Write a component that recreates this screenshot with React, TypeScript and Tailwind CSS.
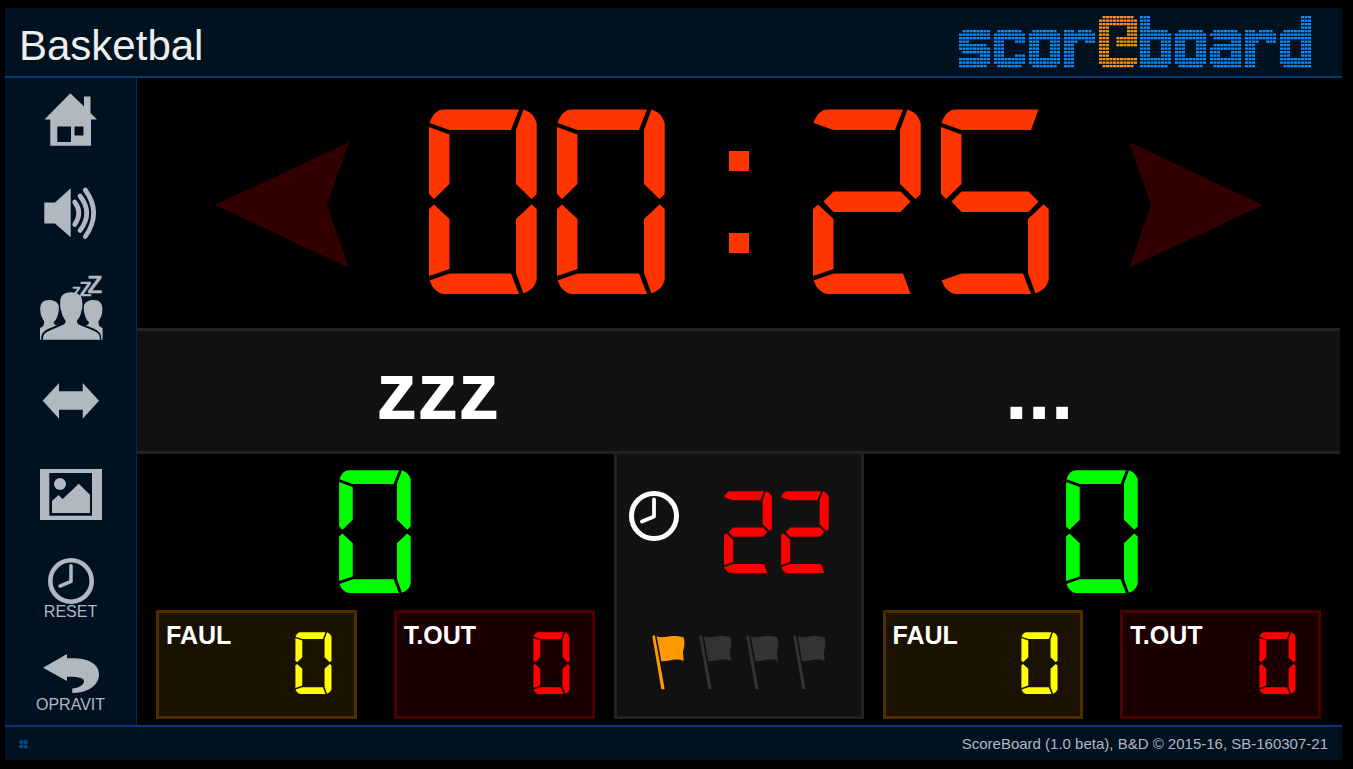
import { FC, ReactNode } from 'react';

// Seven segment shapes, drawn on a 108 x 185 cell
const SEGMENTS: Record<string, string> = {
  a: 'M0.5 14 Q5 0.5 15 0.5 H90 L82 21 H20.5 Z',
  b: 'M94.5 0.5 Q105 4 107.7 14 V85 L102.5 90 L87 75 V21 Z',
  c: 'M102.5 95.5 L107.7 100 V171 Q105 181 94.5 184.5 L87 164 V110 Z',
  d: 'M0.5 171.5 L20.5 164.5 H82 L90 185 H15 Q5 184 0.5 171.5 Z',
  e: 'M5 95.5 L20.5 110 V160 L0 167 V100 Z',
  f: 'M0 18 L20.5 25.5 V75 L5 90 L0 85 Z',
  g: 'M10.5 92.5 L20.5 82.5 H87.5 L97.5 92.5 L87.5 103 H20.5 Z',
  // longer top and bottom bars, for digits with nothing on their right
  A: 'M0.5 14 Q5 0.5 15 0.5 H97.5 L90 21 H20.5 Z',
  D: 'M0.5 171.5 L20.5 164.5 H90 L97.5 185 H15 Q5 184 0.5 171.5 Z',
};

const DIGITS: Record<string, string> = {
  '0': 'abcdef',
  '1': 'bc',
  '2': 'abgeD',
  '3': 'abgcd',
  '4': 'fgbc',
  '5': 'Afgcd',
  '6': 'Afgedc',
  '7': 'abc',
  '8': 'abcdefg',
  '9': 'abcdfg',
};

const Digit: FC<{ value: string; className: string }> = ({ value, className }) => (
  <svg viewBox="0 0 108 185" className={className} fill="currentColor" aria-hidden="true">
    {DIGITS[value].split('').map((s) => (
      <path key={s} d={SEGMENTS[s]} />
    ))}
  </svg>
);

const Display: FC<{ value: string; className: string; digit: string }> = ({ value, className, digit }) => (
  <div role="img" aria-label={value} className={className}>
    {value.split('').map((v, i) => (
      <Digit key={i} value={v} className={digit} />
    ))}
  </div>
);

// Dot matrix letters of the logo, x is the left edge of each one
const ROUND = ['.#######.', '#########', '#########', '###...###', '###...###', '###...###', '###...###', '###...###', '#########', '#########', '.#######.'];
const LEG = ['###.####.', '#########', '#########', '####..###', '###', '###', '###', '###', '###', '###', '###'];

const LOGO = [
  { x: 0, rows: ['.########', '#########', '#########', '###......', '########.', '#########', '.########', '......###', '#########', '#########', '########.'] },
  { x: 35, rows: ['.#######.', '#########', '#########', '###...###', '###', '###', '###', '###...###', '#########', '#########', '.#######.'] },
  { x: 70, rows: ROUND },
  { x: 105, rows: LEG },
  { x: 140, rows: ['.#########.', '###########', '###########', '###.....###', '###.....###', '###.....###', '###..######', '###..######', '###..######', '###', '###', '###', '###########', '###########', '.#########.'] },
  { x: 181, rows: ['###', '###', '###', '###', '########.', '#########', '#########', '###...###', '###...###', '###...###', '###...###', '###...###', '#########', '#########', '########.'] },
  { x: 216, rows: ROUND },
  { x: 251, rows: ['.#######.', '#########', '.########', '......###', '.########', '#########', '###...###', '###...###', '#########', '#########', '.########'] },
  { x: 286, rows: LEG },
  { x: 321, rows: ['......###', '......###', '......###', '......###', '.########', '#########', '#########', '###...###', '###...###', '###...###', '###...###', '###...###', '#########', '#########', '.########'] },
];

const Logo: FC = () => (
  <svg width="353" height="52" viewBox="0 0 353 52" role="img" aria-label="scoreboard">
    {LOGO.map(({ x, rows }, n) => (
      <g key={x} fill={n === 4 ? '#ff9409' : '#098cfa'}>
        {rows.map((row, r) =>
          row.split('').map((dot, c) =>
            dot === '#' ? (
              <rect key={`${r}-${c}`} x={x + c * 3.5} y={(15 - rows.length + r) * 3.5} width="3" height="2.3" />
            ) : null
          )
        )}
      </g>
    ))}
  </svg>
);

const ClockIcon: FC<{ className: string }> = ({ className }) => (
  <svg viewBox="0 0 50 50" className={className} fill="none" stroke="currentColor" aria-hidden="true">
    <circle cx="25" cy="25" r="22.5" strokeWidth="5" />
    <path d="M25 8.5 V25.5 L13 30.5" strokeWidth="3.8" strokeLinecap="round" strokeLinejoin="round" />
  </svg>
);

const Glyph: FC<{ children: ReactNode }> = ({ children }) => (
  <svg width="63" height="64" viewBox="0 0 63 64" fill="currentColor" className="overflow-visible" aria-hidden="true">
    {children}
  </svg>
);

const SideButton: FC<{ label: string; children: ReactNode }> = ({ label, children }) => (
  <button
    aria-label={label}
    className="flex h-16 w-20 flex-col items-center justify-center text-base leading-4 whitespace-nowrap"
  >
    {children}
  </button>
);

const Sidebar: FC = () => (
  <nav className="flex w-[132px] flex-none flex-col items-center justify-between border-r border-[#002850] bg-[#00111f] pt-2.5 pb-2.5 text-[#b2b8c0]">
    <SideButton label="Home">
      <Glyph>
        <path
          fillRule="evenodd"
          d="M31.3 5.3 L45 18.5 V8.5 H51.5 V25 L58 31.5 H52 V57.7 H11.3 V31.5 H5.5 Z M18.3 38.5 V54 H32 V38.5 Z M35.5 38.5 V47.5 H44.5 V38.5 Z"
        />
      </Glyph>
    </SideButton>
    <SideButton label="Sound">
      <Glyph>
        <path d="M5.3 20.5 H16 L31.7 6.3 V55.3 L16 41.5 H5.3 Z" />
        <path
          d="M35.7 20 Q44 31 35.7 42.5 M41 14 Q54.5 31 41 48.5 M46.3 8 Q63 31 46.3 54.5"
          fill="none"
          stroke="currentColor"
          strokeWidth="4.7"
          strokeLinecap="round"
        />
      </Glyph>
    </SideButton>
    <SideButton label="Teams">
      <Glyph>
        <path d="M10.3 24 C4 24 1 27 1.2 34 C1.4 39 3 42 5 45 C5.5 49 4 51 1 52 V63.7 H2.3 C2 57 5 55 10 52.5 L18 49.3 C16 48.8 14.5 48.5 14.7 46 C17.5 44 18.5 40 19.3 37 C20 34 20 32 19.5 29 C18 25.5 14 24 10.3 24 Z" />
        <path
          transform="translate(64.6 0) scale(-1 1)"
          d="M10.3 24 C4 24 1 27 1.2 34 C1.4 39 3 42 5 45 C5.5 49 4 51 1 52 V63.7 H2.3 C2 57 5 55 10 52.5 L18 49.3 C16 48.8 14.5 48.5 14.7 46 C17.5 44 18.5 40 19.3 37 C20 34 20 32 19.5 29 C18 25.5 14 24 10.3 24 Z"
        />
        <path d="M32 16.3 C26 16.5 21 19 21.3 26 C21 30 21.2 33 22.3 35 C23 39 24.5 42 26.5 44.5 C27 47 25.5 48.5 22.5 49.5 L12 54 C6 56.5 4 58 4 63.7 H61 C61 58 59 56.5 53 54 L42 49.5 C39 48.5 37.5 47 38 44.5 C40.5 42 41.8 39 42.4 35 C43.4 33 43.6 30 43.2 26 C43.4 19 38 16.5 32 16.3 Z" />
        <g className="font-['Liberation_Sans',Arial,sans-serif]" stroke="currentColor" strokeWidth="0.6">
          <text x="33" y="21" fontSize="18">z</text>
          <text x="40.5" y="20" fontSize="25">z</text>
          <text x="48" y="17" fontSize="32">z</text>
        </g>
      </Glyph>
    </SideButton>
    <SideButton label="Swap sides">
      <Glyph>
        <path d="M3.7 31.7 L20 14 V22.3 H43.7 V14 L60 31.7 L43.7 49.7 V40.7 H20 V49.7 Z" />
      </Glyph>
    </SideButton>
    <SideButton label="Pictures">
      <Glyph>
        <path fillRule="evenodd" d="M1 6 H63 V57 H1 Z M10.3 10 V52.7 H53 V10 Z" />
        <path d="M13 38 L19.5 32 L23.7 36 L39.7 20.7 L51 31.7 V50 H13 Z" />
        <circle cx="21" cy="21" r="6" />
      </Glyph>
    </SideButton>
    <SideButton label="Reset">
      <ClockIcon className="size-[46px]" />
      <span>RESET</span>
    </SideButton>
    <SideButton label="Opravit">
      <svg width="63" height="45" viewBox="0 0 63 45" fill="currentColor" aria-hidden="true">
        <path d="M4 15.7 L28 2 V6.3 H33 C50 6.3 60 12 60 22.3 C60 34 48 41 33.3 41 V36.5 C40 36 45 33 45 29 C45 25 36 24.7 28 24.7 V29 Z" />
      </svg>
      <span>OPRAVIT</span>
    </SideButton>
  </nav>
);

const ArrowButton: FC<{ label: string; points: string }> = ({ label, points }) => (
  <button aria-label={label} className="text-[#330000]">
    <svg width="134" height="134" viewBox="0 0 134 134" fill="currentColor">
      <polygon points={points} />
    </svg>
  </button>
);

const Timer: FC<{ minutes: string; seconds: string }> = ({ minutes, seconds }) => (
  <section className="flex flex-1 items-center justify-center gap-20 pb-[3px]">
    <ArrowButton label="Left" points="0,70 134,7 112,70 134,133" />
    <div className="flex items-center gap-16 text-[#ff3500]">
      <Display value={minutes} className="flex gap-5" digit="h-[185px] w-[108px]" />
      <div className="flex flex-col gap-[62px]">
        <span className="size-5 bg-current" />
        <span className="size-5 bg-current" />
      </div>
      <Display value={seconds} className="flex gap-5" digit="h-[185px] w-[108px]" />
    </div>
    <ArrowButton label="Right" points="134,70 0,7 22,70 0,133" />
  </section>
);

const Counter: FC<{ label: string; value: string; box: string; color: string }> = ({ label, value, box, color }) => (
  <div className={`flex h-[109px] flex-1 items-start justify-between border-3 pr-[22px] pl-[7px] ${box}`}>
    <span className="pt-2 text-[25px] leading-7 font-bold text-white">{label}</span>
    <Display value={value} className={`flex pt-[19px] ${color}`} digit="h-[62px] w-[37px]" />
  </div>
);

const Team: FC<{ score: string; fouls: string; timeouts: string }> = ({ score, fouls, timeouts }) => (
  <section className="flex flex-col justify-between px-[19px] pt-4">
    <Display value={score} className="flex justify-center text-[#00ff00]" digit="h-[123px] w-[72px]" />
    <div className="flex gap-[37px]">
      <Counter label="FAUL" value={fouls} box="border-[#4a2e00] bg-[#1a1100]" color="text-[#ffff00]" />
      <Counter label="T.OUT" value={timeouts} box="border-[#4a0000] bg-[#1a0000]" color="text-[#ff0000]" />
    </div>
  </section>
);

const Flag: FC<{ active: boolean }> = ({ active }) => (
  <button aria-label="Period" className={active ? 'text-[#ff9900]' : 'text-[#333333]'}>
    <svg width="33" height="55" viewBox="0 0 33 55" fill="currentColor">
      <path d="M0.3 1.2 Q1.5 -0.3 3 0.8 L12.7 54.3 H9.3 Z" />
      <path d="M4.7 1.3 C12 4.5 17 -1.5 31.5 2.3 C33.5 8 32 12 31 17 C30.8 20 32 23 31.4 26 C24 22.5 17 26.5 9.3 26.3 Z" />
    </svg>
  </button>
);

const App: FC = () => (
  <div className="flex min-h-screen flex-col bg-black pt-2 pr-[11px] pb-[9px] pl-[5px] font-['Liberation_Sans',Arial,sans-serif]">
    <header className="flex h-[70px] items-start justify-between border-b-2 border-[#003a70] bg-[#00111f] pt-2 pr-[30px] pl-3.5">
      <h1 className="pt-[5px] text-[42px] leading-[50px] text-[#eeeeee]">Basketbal</h1>
      <Logo />
    </header>

    <div className="flex flex-1">
      <Sidebar />
      <main className="flex flex-1 flex-col pr-0.5 pb-1.5">
        <Timer minutes="00" seconds="25" />

        <div className="grid h-[126px] grid-cols-2 items-center border-y-3 border-[#222222] bg-[#111111] text-center text-[82px] leading-[82px] font-bold text-white">
          <h2>zzz</h2>
          <h2>...</h2>
        </div>

        <div className="grid h-[265px] grid-cols-[1fr_250px_1fr]">
          <Team score="0" fouls="0" timeouts="0" />
          <section className="flex flex-col justify-between border-x-3 border-b-3 border-[#222222] bg-[#111111] pt-[37px] pb-[26px]">
            <div className="flex items-start justify-between pr-8 pl-3">
              <ClockIcon className="size-[50px] text-white" />
              <Display value="22" className="flex gap-[9px] text-[#ff0000]" digit="h-[82px] w-12" />
            </div>
            <div className="flex justify-center gap-3.5">
              {[1, 2, 3, 4].map((period) => (
                <Flag key={period} active={period === 1} />
              ))}
            </div>
          </section>
          <Team score="0" fouls="0" timeouts="0" />
        </div>
      </main>
    </div>

    <footer className="flex h-[35px] items-center justify-between border-t-2 border-[#003a70] bg-[#00111f] px-3.5 pt-0.5 text-[15px] text-[#b2b8c0]">
      <svg width="9" height="9" viewBox="0 0 9 9" fill="#004b85" aria-hidden="true">
        <circle cx="2.2" cy="2.2" r="2.1" />
        <circle cx="6.6" cy="2.2" r="2.1" />
        <circle cx="2.2" cy="6.6" r="2.1" />
        <circle cx="6.6" cy="6.6" r="2.1" />
      </svg>
      <span>ScoreBoard (1.0 beta), B&amp;D © 2015-16, SB-160307-21</span>
    </footer>
  </div>
);

export default App;
